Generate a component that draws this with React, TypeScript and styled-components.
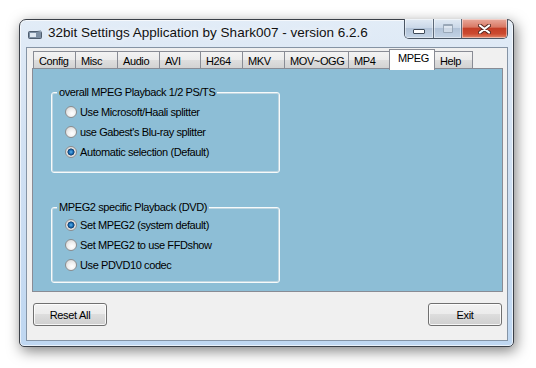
import React from "react";
import styled, { createGlobalStyle } from "styled-components";

const GlobalStyle = createGlobalStyle`
  html, body {
    margin: 0;
    padding: 0;
    background: #fff;
  }
  body {
    font-family: "Liberation Sans", Arial, sans-serif;
  }
`;

const Page = styled.div`
  width: 536px;
  height: 368px;
  padding: 19px 0 0 19px;
  box-sizing: border-box;
`;

const Window = styled.div`
  width: 495px;
  height: 328px;
  box-sizing: border-box;
  border: 1px solid #3b4048;
  border-radius: 7px 7px 5px 5px;
  background: linear-gradient(to bottom, #e2ecf7 0%, #d3e2f3 35%, #bfd7f1 100%);
  box-shadow: 2px 4px 14px rgba(0, 0, 0, 0.5),
    inset 0 0 0 1px rgba(255, 255, 255, 0.65);
  display: flex;
  flex-direction: column;
  padding: 0 5px 5px 6px;
`;

const TitleBar = styled.div`
  height: 27px;
  display: flex;
  align-items: flex-start;
  flex-shrink: 0;
`;

const TitleIcon = styled.svg`
  margin: 10px 6px 0 2px;
  flex-shrink: 0;
`;

const TitleText = styled.div`
  font-size: 13.5px;
  line-height: 16px;
  padding-top: 5px;
  color: #111;
  white-space: nowrap;
  text-shadow: 0 0 6px rgba(255, 255, 255, 0.9);
`;

const CaptionButtons = styled.div`
  margin-left: auto;
  margin-top: -1px;
  display: flex;
  height: 20px;
  border: 1px solid #4a5563;
  border-top: none;
  border-radius: 0 0 5px 5px;
  overflow: hidden;
  box-sizing: border-box;
`;

const CaptionButton = styled.div<{ $w: number; $close?: boolean }>`
  width: ${(p) => p.$w}px;
  height: 100%;
  box-sizing: border-box;
  display: flex;
  align-items: center;
  justify-content: center;
  border-left: 1px solid #5d6978;
  box-shadow: inset 0 0 0 1px rgba(255, 255, 255, 0.45);
  background: ${(p) =>
    p.$close
      ? "linear-gradient(to bottom, #e9aa9c 0%, #d97a66 42%, #c43f27 50%, #cc4a30 78%, #e2876a 100%)"
      : "linear-gradient(to bottom, #e1eaf4 0%, #cbd8e8 45%, #b2c3d8 50%, #c3d3e5 100%)"};
  &:first-child {
    border-left: none;
  }
`;

const MinGlyph = styled.span`
  width: 10px;
  height: 3px;
  margin-top: 6px;
  background: #fff;
  border: 1px solid #3f4a58;
  border-radius: 1px;
`;

const MaxGlyph = styled.span`
  width: 8px;
  height: 6px;
  border: 1px solid #9aa8b8;
  border-top-width: 2px;
  background: rgba(255, 255, 255, 0.35);
  border-radius: 1px;
`;

const Client = styled.div`
  flex: 1;
  border: 1px solid #8594a5;
  background: #f0f0f0;
  display: flex;
  flex-direction: column;
  padding: 0 4px 0 5px;
`;

const TabRow = styled.div`
  height: 20px;
  display: flex;
  align-items: flex-start;
  padding-left: 1px;
  position: relative;
  z-index: 1;
`;

const Tab = styled.div<{ $w: number; $active?: boolean }>`
  width: ${(p) => p.$w}px;
  box-sizing: border-box;
  margin-left: -1px;
  border: 1px solid #898c95;
  border-bottom: none;
  font-size: 11px;
  letter-spacing: -0.4px;
  line-height: 16px;
  color: #000;
  white-space: nowrap;
  &:first-child {
    margin-left: 0;
  }
  ${(p) =>
    p.$active
      ? `
    height: 21px;
    margin-top: 1px;
    padding: 0 0 0 8px;
    background: #fff;
  `
      : `
    height: 17px;
    margin-top: 3px;
    padding: 1px 0 0 5px;
    background: linear-gradient(to bottom, #f3f3f3 0%, #ebebeb 50%, #dedede 50%, #d2d2d2 100%);
  `}
`;

const Panel = styled.div`
  height: 224px;
  flex-shrink: 0;
  box-sizing: border-box;
  border: 1px solid #898c95;
  background: #8dbed6;
  padding: 23px 0 0 18px;
  display: flex;
  flex-direction: column;
  gap: 34px;
`;

const Group = styled.div<{ $pt: number; $pb: number }>`
  position: relative;
  width: 229px;
  box-sizing: border-box;
  border: 1px solid #f7fafb;
  border-radius: 3px;
  box-shadow: inset 0 0 0 1px rgba(213, 223, 229, 0.7);
  padding: ${(p) => p.$pt}px 0 ${(p) => p.$pb}px 13px;
`;

const Caption = styled.div`
  position: absolute;
  top: -7px;
  left: 5px;
  padding: 0 2px;
  background: #8dbed6;
  font-size: 11px;
  letter-spacing: -0.4px;
  line-height: 13px;
  color: #000;
  white-space: nowrap;
`;

const Option = styled.div`
  height: 20px;
  display: flex;
  align-items: center;
  font-size: 11px;
  letter-spacing: -0.4px;
  color: #000;
  white-space: nowrap;
`;

const Radio = styled.span<{ $on?: boolean }>`
  width: 12px;
  height: 12px;
  flex-shrink: 0;
  margin-right: 3px;
  box-sizing: border-box;
  border-radius: 50%;
  border: 1px solid #8b8d8f;
  background: ${(p) =>
    p.$on
      ? "radial-gradient(circle at 50% 50%, #5cb4ee 0px, #1b6db5 2px, #0b3c6e 3.2px, #dadada 3.8px, #f2f2f2 100%)"
      : "radial-gradient(circle at 60% 65%, #ffffff 0%, #f1f1f1 40%, #cfcfcf 100%)"};
`;

const Footer = styled.div`
  display: flex;
  justify-content: space-between;
  padding: 11px 1px 0 1px;
`;

const Button = styled.div`
  width: 74px;
  height: 23px;
  box-sizing: border-box;
  border: 1px solid #707070;
  border-radius: 3px;
  background: linear-gradient(to bottom, #f2f2f2 0%, #ebebeb 50%, #dddddd 50%, #cfcfcf 100%);
  box-shadow: inset 0 0 0 1px rgba(255, 255, 255, 0.8);
  display: flex;
  align-items: center;
  justify-content: center;
  font-size: 11px;
  letter-spacing: -0.3px;
  color: #000;
`;

const tabs = [
  { label: "Config", w: 43 },
  { label: "Misc", w: 43 },
  { label: "Audio", w: 43 },
  { label: "AVI", w: 42 },
  { label: "H264", w: 43 },
  { label: "MKV", w: 43 },
  { label: "MOV~OGG", w: 65 },
  { label: "MP4", w: 42 },
  { label: "MPEG", w: 46, active: true },
  { label: "Help", w: 39 },
];

const App = () => {
  return (
    <>
      <GlobalStyle />
      <Page>
        <Window>
          <TitleBar>
            <TitleIcon width="14" height="9" viewBox="0 0 14 9">
              <rect x="0.5" y="1.5" width="13" height="7" rx="1" fill="#7d8fa3" stroke="#4e5d6e" />
              <rect x="2" y="3" width="6" height="4" fill="#dfe8f1" />
              <path d="M9 1 L13 0 L13 2 Z" fill="#9fb0c2" />
            </TitleIcon>
            <TitleText>32bit Settings Application by Shark007 - version 6.2.6</TitleText>
            <CaptionButtons>
              <CaptionButton $w={28}>
                <MinGlyph />
              </CaptionButton>
              <CaptionButton $w={28}>
                <MaxGlyph />
              </CaptionButton>
              <CaptionButton $w={46} $close>
                <svg width="13" height="10" viewBox="0 0 13 10">
                  <path d="M2 1.5 L11 8.5 M11 1.5 L2 8.5" stroke="#5a2a22" strokeWidth="4" strokeLinecap="round" />
                  <path d="M2 1.5 L11 8.5 M11 1.5 L2 8.5" stroke="#fff" strokeWidth="2.2" strokeLinecap="round" />
                </svg>
              </CaptionButton>
            </CaptionButtons>
          </TitleBar>
          <Client>
            <TabRow>
              {tabs.map((t) => (
                <Tab key={t.label} $w={t.w} $active={t.active}>
                  {t.label}
                </Tab>
              ))}
            </TabRow>
            <Panel>
              <Group $pt={9} $pb={10}>
                <Caption>overall MPEG Playback 1/2 PS/TS</Caption>
                <Option>
                  <Radio />
                  Use Microsoft/Haali splitter
                </Option>
                <Option>
                  <Radio />
                  use Gabest's Blu-ray splitter
                </Option>
                <Option>
                  <Radio $on />
                  Automatic selection (Default)
                </Option>
              </Group>
              <Group $pt={7} $pb={7}>
                <Caption>MPEG2 specific Playback (DVD)</Caption>
                <Option>
                  <Radio $on />
                  Set MPEG2 (system default)
                </Option>
                <Option>
                  <Radio />
                  Set MPEG2 to use FFDshow
                </Option>
                <Option>
                  <Radio />
                  Use PDVD10 codec
                </Option>
              </Group>
            </Panel>
            <Footer>
              <Button>Reset All</Button>
              <Button>Exit</Button>
            </Footer>
          </Client>
        </Window>
      </Page>
    </>
  );
};

export default App;
